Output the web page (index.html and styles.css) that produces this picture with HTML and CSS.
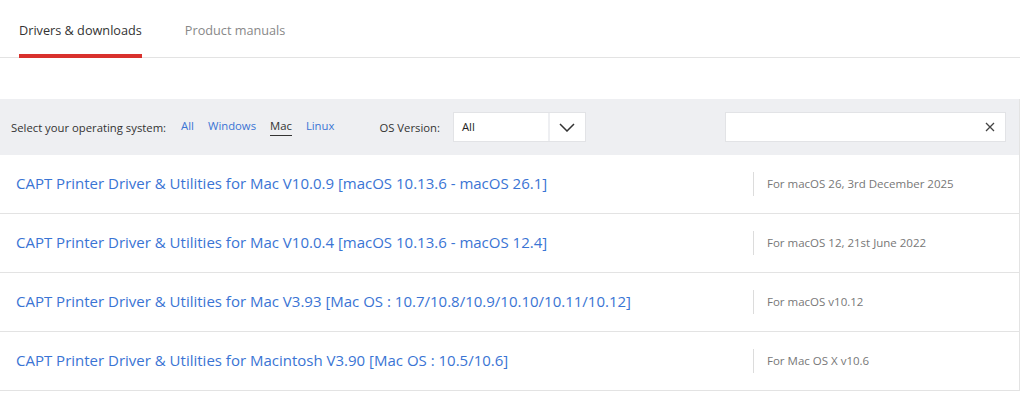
FILE: index.html
```html
<!DOCTYPE html>
<html lang="en">
  <head>
    <meta charset="UTF-8" />
    <meta name="viewport" content="width=device-width, initial-scale=1.0" />
    <title>Drivers &amp; downloads</title>

    <link rel="stylesheet" href="styles.css">
  </head>
  <body>
    <div class="side">
      <nav class="tabs">
        <button class="tab valgt">Drivers &amp; downloads</button>
        <button class="tab">Product manuals</button>
      </nav>

      <section class="filter">
        <span class="label">Select your operating system:</span>
        <div class="os">
          <a href="#">All</a>
          <a href="#">Windows</a>
          <a href="#" class="aktiv">Mac</a>
          <a href="#">Linux</a>
        </div>
        <span class="label version">OS Version:</span>
        <div class="select">
          <span class="valg">All</span>
          <span class="pil">
            <svg width="16" height="9" viewBox="0 0 16 9">
              <path d="M1 1l7 7 7-7" fill="none" stroke="#333" stroke-width="1.5" />
            </svg>
          </span>
        </div>
        <div class="soeg">
          <input type="text" />
          <svg width="10" height="10" viewBox="0 0 10 10">
            <path d="M1 1l8 8M9 1l-8 8" stroke="#444" stroke-width="1.3" />
          </svg>
        </div>
      </section>

      <section id="liste"></section>
    </div>

    <template>
      <article class="driver">
        <a href="#" class="titel"></a>
        <p class="info"></p>
      </article>
    </template>

    <script>
      const drivere = [
        {
          titel: "CAPT Printer Driver & Utilities for Mac V10.0.9 [macOS 10.13.6 - macOS 26.1]",
          info: "For macOS 26, 3rd December 2025",
        },
        {
          titel: "CAPT Printer Driver & Utilities for Mac V10.0.4 [macOS 10.13.6 - macOS 12.4]",
          info: "For macOS 12, 21st June 2022",
        },
        {
          titel: "CAPT Printer Driver & Utilities for Mac V3.93 [Mac OS : 10.7/10.8/10.9/10.10/10.11/10.12]",
          info: "For macOS v10.12",
        },
        {
          titel: "CAPT Printer Driver & Utilities for Macintosh V3.90 [Mac OS : 10.5/10.6]",
          info: "For Mac OS X v10.6",
        },
      ];

      const dest = document.querySelector("#liste");
      const skabelon = document.querySelector("template").content;
      drivere.forEach((driver) => {
        const klon = skabelon.cloneNode(true);
        klon.querySelector(".titel").textContent = driver.titel;
        klon.querySelector(".info").textContent = driver.info;
        dest.appendChild(klon);
      });
    </script>
  </body>
</html>
```

FILE: styles.css
```css
* {
  box-sizing: border-box;
}

body {
  margin: 0;
  background-color: white;
  font-family: "Open Sans", "Liberation Sans", sans-serif;
  color: #333;
}

.side {
  width: 1020px;
}

.tabs {
  display: flex;
  gap: 43px;
  padding-left: 19px;
  height: 58px;
  border-bottom: 1px solid #e3e3e3;
}

.tab {
  border: none;
  background: none;
  padding: 0;
  font-family: inherit;
  font-size: 12.7px;
  color: #888;
  border-bottom: 4px solid transparent;
  height: 58px;
  padding-top: 5px;
}

.tab.valgt {
  color: #333;
  border-bottom-color: #d9312d;
}

.filter {
  margin-top: 41px;
  height: 56px;
  background-color: #eeeff2;
  display: flex;
  align-items: center;
  padding-left: 11px;
  padding-right: 13px;
  border-right: 1px solid #e3e3e3;
}

.label {
  font-size: 11.3px;
  color: #333;
}

.os {
  display: flex;
  gap: 14px;
  margin-left: 15px;
}

.os a {
  font-size: 11.3px;
  color: #3a74d4;
  text-decoration: none;
  padding-bottom: 2px;
}

.os a.aktiv {
  color: #333;
  border-bottom: 1px solid #333;
}

.version {
  margin-left: 45px;
}

.select {
  margin-left: 13px;
  width: 133px;
  height: 30px;
  background: white;
  border: 1px solid #e2e3e6;
  display: flex;
}

.valg {
  flex: 1;
  font-size: 11.3px;
  padding-left: 8px;
  line-height: 28px;
  color: #222;
}

.pil {
  width: 37px;
  border-left: 2px solid #eeeff2;
  display: flex;
  align-items: center;
  justify-content: center;
}

.soeg {
  margin-left: auto;
  width: 281px;
  height: 30px;
  background: white;
  border: 1px solid #e2e3e6;
  display: flex;
  align-items: center;
  padding-right: 10px;
}

.soeg input {
  flex: 1;
  border: none;
  outline: none;
  height: 26px;
}

.driver {
  display: flex;
  align-items: center;
  height: 59px;
  border-bottom: 1px solid #e3e3e3;
  border-right: 1px solid #e3e3e3;
  padding-left: 16px;
}

.titel {
  width: 737px;
  font-size: 15px;
  color: #3a74d4;
  text-decoration: none;
  margin-top: -2px;
}

.info {
  margin: 0;
  border-left: 1px solid #dcdcdc;
  padding-left: 13px;
  line-height: 24px;
  font-size: 11.5px;
  color: #777;
}
```
